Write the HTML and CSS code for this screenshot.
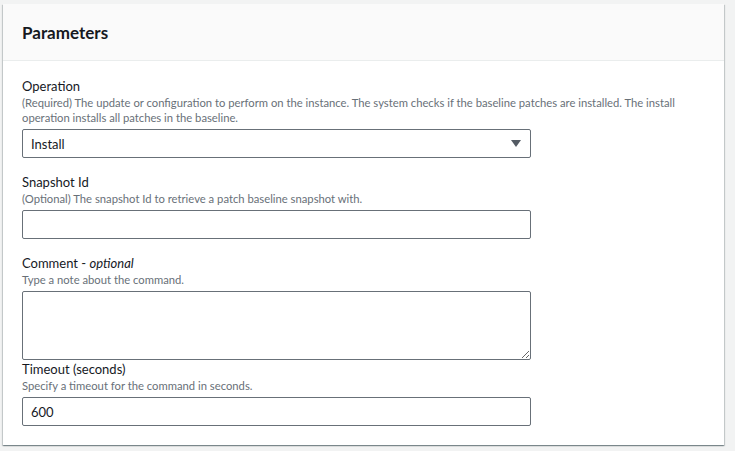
FILE: index.html
```html
<!DOCTYPE html>
<html lang="en">
<head>
  <meta charset="UTF-8">
  <meta name="viewport" content="width=device-width, initial-scale=1.0">
  <title>Run Command - Parameters</title>
  <link rel="stylesheet" href="styles.css">
</head>
<body>

  <div class="panel">
    <div class="panel-header">
      <h2>Parameters</h2>
    </div>

    <div class="panel-body">
      <div class="field">
        <label for="operation">Operation</label>
        <p class="hint">(Required) The update or configuration to perform on the instance. The system checks if the baseline patches are installed. The install operation installs all patches in the baseline.</p>
        <div class="select-wrap">
          <select id="operation" class="control">
            <option>Install</option>
            <option>Scan</option>
          </select>
          <span class="caret"></span>
        </div>
      </div>

      <div class="field">
        <label for="snapshot">Snapshot Id</label>
        <p class="hint">(Optional) The snapshot Id to retrieve a patch baseline snapshot with.</p>
        <input id="snapshot" class="control" type="text">
      </div>

      <div class="field">
        <label for="comment">Comment - <em>optional</em></label>
        <p class="hint">Type a note about the command.</p>
        <textarea id="comment" class="control area"></textarea>
      </div>

      <div class="field field-tight">
        <label for="timeout">Timeout (seconds)</label>
        <p class="hint">Specify a timeout for the command in seconds.</p>
        <input id="timeout" class="control" type="text" value="600">
      </div>
    </div>
  </div>

</body>
</html>
```

FILE: styles.css
```css
body {
  margin: 0;
  padding: 4px 11px 7px 3px;
  background-color: #f2f3f3;
  color: #16191f;
  font-family: Lato, "Liberation Sans", Arial, sans-serif;
}

.panel {
  background-color: #fff;
  box-shadow: 0 1px 1px 0 rgba(0, 28, 36, 0.3), 1px 1px 1px 0 rgba(0, 28, 36, 0.15), -1px 1px 1px 0 rgba(0, 28, 36, 0.15);
}

.panel-header {
  background-color: #fafafa;
  border-bottom: 1px solid #eaeded;
  height: 56px;
  padding: 0 19px;
  display: flex;
  align-items: center;
}

.panel-header h2 {
  margin: 0;
  font-size: 17px;
  font-weight: 700;
}

.panel-body {
  padding: 16px 19px 19px;
}

.field {
  margin-top: 15px;
}

.field:first-child {
  margin-top: 0;
}

.field-tight {
  margin-top: 0;
}

label {
  display: block;
  font-size: 13px;
  line-height: 18px;
}

label em {
  font-style: italic;
}

.hint {
  margin: 0 0 4px;
  font-size: 11.25px;
  line-height: 15px;
  color: #687078;
  max-width: 680px;
}

.control {
  display: block;
  box-sizing: border-box;
  width: 509px;
  height: 29px;
  margin: 0;
  padding: 0 8px;
  border: 1px solid #687078;
  border-radius: 2px;
  background-color: #fff;
  color: #16191f;
  font-family: inherit;
  font-size: 13px;
}

.area {
  height: 69px;
  resize: vertical;
}

.select-wrap {
  position: relative;
  width: 509px;
}

select.control {
  appearance: none;
  -webkit-appearance: none;
}

.caret {
  position: absolute;
  right: 10px;
  top: 11px;
  width: 0;
  height: 0;
  border-left: 5px solid transparent;
  border-right: 5px solid transparent;
  border-top: 7px solid #545b64;
  pointer-events: none;
}
```
